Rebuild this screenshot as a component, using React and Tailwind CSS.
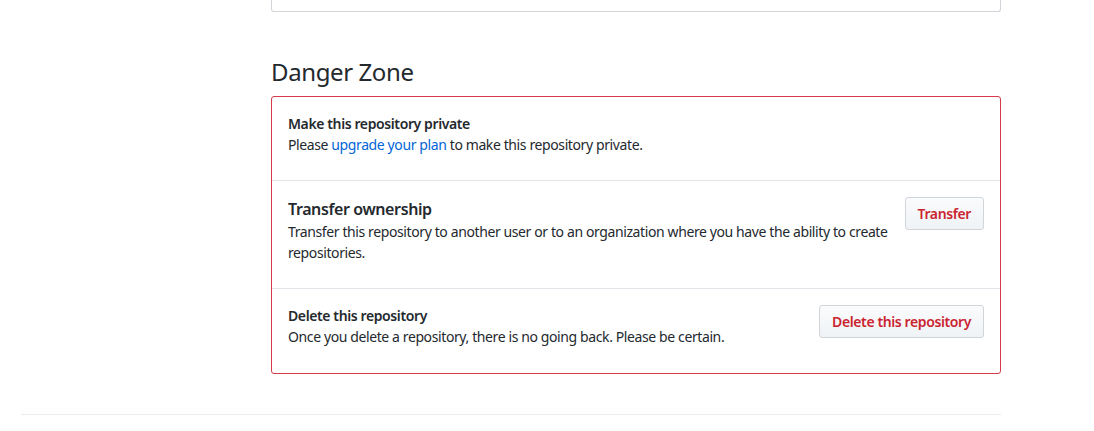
const rows = [
    {
        title: 'Make this repository private',
        big: false,
        body: (
            <>
                Please <a href="#" className="text-[#0366d6]">upgrade your plan</a> to make this
                repository private.
            </>
        ),
    },
    {
        title: 'Transfer ownership',
        big: true,
        body: 'Transfer this repository to another user or to an organization where you have the ability to create repositories.',
        button: 'Transfer',
    },
    {
        title: 'Delete this repository',
        big: false,
        body: 'Once you delete a repository, there is no going back. Please be certain.',
        button: 'Delete this repository',
    },
];

function DangerButton({ children }) {
    return (
        <button
            type="button"
            className="shrink-0 rounded-[3px] border border-[#d1d5da] bg-gradient-to-b from-[#fafbfc] to-[#eff3f6] px-3 py-[5px] text-sm leading-[21px] font-semibold text-[#cb2431]"
        >
            {children}
        </button>
    );
}

export default function App() {
    return (
        <div
            className="min-h-[431px] bg-white text-sm leading-[21px] tracking-[-0.028em] text-[#24292e]"
            style={{ fontFamily: '"Noto Sans", "Open Sans", sans-serif' }}
        >
            <div className="ml-[21px] w-[980px]">
                <div className="flex">
                    <div className="w-[250px] shrink-0" />
                    <div className="w-[730px]">
                        <div className="h-[12px] rounded-b-[3px] border border-t-0 border-[#d1d5da]" />

                        <h2 className="mt-[42px] mb-[6px] text-2xl leading-9 font-normal">Danger Zone</h2>

                        <div className="rounded-[3px] border border-[#d73a49]">
                            {rows.map((row, i) => (
                                <div
                                    key={row.title}
                                    className={`flex items-start gap-4 px-4 pt-4 pb-[25px] last:pb-[26px] ${i > 0 ? 'border-t border-[#e1e4e8]' : ''}`}
                                >
                                    <div className="min-w-0 flex-1">
                                        <div className={row.big ? 'text-base leading-6 font-semibold' : 'font-semibold'}>
                                            {row.title}
                                        </div>
                                        <p>{row.body}</p>
                                    </div>
                                    {row.button && <DangerButton>{row.button}</DangerButton>}
                                </div>
                            ))}
                        </div>
                    </div>
                </div>

                <div className="mt-10 border-t border-[#eaecef]" />
            </div>
        </div>
    );
}
